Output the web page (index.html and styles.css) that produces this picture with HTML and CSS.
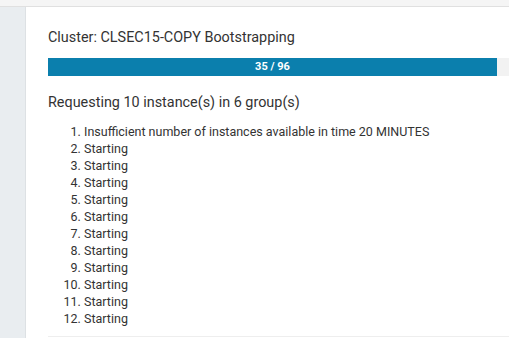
FILE: index.html
```html
<!DOCTYPE html>
<html>
<head>
<meta charset="utf-8">
<link rel="stylesheet" href="styles.css">
</head>
<body>
<div class="topbar"></div>
<div class="layout">
  <aside class="sidebar"></aside>
  <main class="panel">
    <h2 class="title">Cluster: CLSEC15-COPY Bootstrapping</h2>
    <div class="track">
      <div class="fill" style="width:449px">35 / 96</div>
    </div>
    <p class="request">Requesting 10 instance(s) in 6 group(s)</p>
    <ol class="steps">
      <li>Insufficient number of instances available in time 20 MINUTES</li>
      <li>Starting</li>
      <li>Starting</li>
      <li>Starting</li>
      <li>Starting</li>
      <li>Starting</li>
      <li>Starting</li>
      <li>Starting</li>
      <li>Starting</li>
      <li>Starting</li>
      <li>Starting</li>
      <li>Starting</li>
    </ol>
    <div class="rule"></div>
  </main>
</div>
</body>
</html>
```

FILE: styles.css
```css
html, body {
  margin: 0;
  padding: 0;
  background: #ffffff;
  font-family: Roboto, "Liberation Sans", sans-serif;
  color: #333333;
  overflow: hidden;
}
.topbar {
  height: 6px;
  background: #f5f5f5;
  border-bottom: 1px solid #e0e0e0;
}
.layout {
  display: flex;
  height: 331px;
}
.sidebar {
  width: 25px;
  flex: none;
  background: #e9edf0;
  border-right: 1px solid #dde1e4;
}
.panel {
  flex: 1;
  min-width: 0;
  padding: 21px 0 0 22px;
  overflow: hidden;
}
.title {
  margin: 0 0 10px;
  font-size: 14.4px;
  font-weight: 400;
  line-height: 20px;
}
.track {
  width: 480px;
  height: 18px;
  background: #f2f2f2;
}
.fill {
  height: 18px;
  background: #0b7fad;
  color: #ffffff;
  font-size: 11px;
  font-weight: 700;
  line-height: 18px;
  text-align: center;
}
.request {
  margin: 17px 0 10px;
  font-size: 14.4px;
  line-height: 20px;
}
.steps {
  margin: 0;
  padding-left: 36px;
  font-size: 12.5px;
  line-height: 17px;
}
.rule {
  margin-top: 9px;
  width: 480px;
  border-top: 1px solid #eeeeee;
}
```
